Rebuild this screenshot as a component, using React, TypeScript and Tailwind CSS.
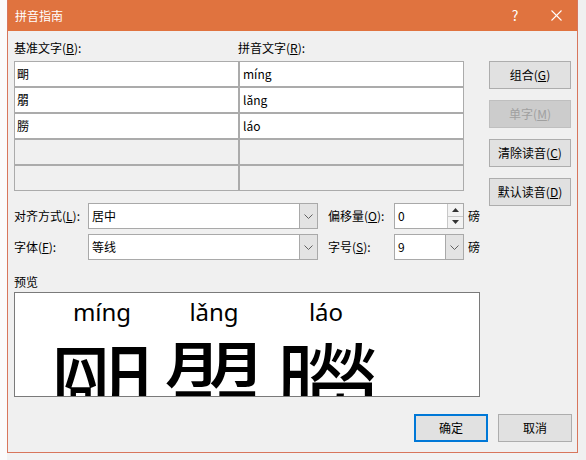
import React from "react";

const ui = "font-['Noto_Sans_CJK_SC','Noto_Sans',sans-serif]";

function Mn({ label, k, tail = "" }: { label: string; k: string; tail?: string }) {
  return (
    <span className="whitespace-nowrap">
      {label}(<span className="underline">{k}</span>){tail}
    </span>
  );
}

function Chevron() {
  return (
    <svg width="9" height="5" viewBox="0 0 9 5">
      <polyline points="0.5,0.5 4.5,4.5 8.5,0.5" fill="none" stroke="#606060" strokeWidth="1" />
    </svg>
  );
}

function Combo({ value, width }: { value: string; width: string }) {
  return (
    <div className={`${width} shrink-0 h-[26px] flex border border-[#a9a9a9] bg-white`}>
      <div className="flex-1 flex items-center pl-[3px] text-[12px] text-black">{value}</div>
      <div className="w-[18px] flex items-center justify-center bg-[#e3e3e3] border-l border-[#a9a9a9]">
        <Chevron />
      </div>
    </div>
  );
}

const rows = [
  { base: "朙", ruby: "míng" },
  { base: "朤", ruby: "lǎng" },
  { base: "朥", ruby: "láo" },
  null,
  null,
];

const sideButtons = [
  { label: "组合", k: "G", disabled: false },
  { label: "单字", k: "M", disabled: true },
  { label: "清除读音", k: "C", disabled: false },
  { label: "默认读音", k: "D", disabled: false },
];

export default function App() {
  return (
    <div className={`w-[586px] h-[460px] flex bg-[#f2f2f2] ${ui}`}>
      {/* window behind, left */}
      <div className="w-[7px] h-full bg-[#fbfbfb]" />

      {/* dialog */}
      <div className="w-[571px] h-[453px] flex flex-col border-x border-b border-[#d8765c]">
        <div className="h-[31px] flex items-center bg-[#e0733f] text-white pl-[7px]">
          <span className="text-[12px]">拼音指南</span>
          <div className="flex-1" />
          <span className="text-[14px] w-[20px] text-center mr-[26px]">?</span>
          <svg width="11" height="11" viewBox="0 0 11 11" className="mr-[15px]">
            <line x1="0.5" y1="0.5" x2="10.5" y2="10.5" stroke="white" strokeWidth="1.1" />
            <line x1="10.5" y1="0.5" x2="0.5" y2="10.5" stroke="white" strokeWidth="1.1" />
          </svg>
        </div>

        <div className="flex-1 flex flex-col bg-[#f0f0f0] pl-[6px] pr-[5px] pt-[9px] text-[12px] text-black">
          <div className="flex gap-[9px]">
            {/* left column */}
            <div className="w-[466px] flex flex-col">
              <div className="flex h-[16px] items-center">
                <div className="w-[224px]">
                  <Mn label="基准文字" k="B" tail=":" />
                </div>
                <Mn label="拼音文字" k="R" tail=":" />
              </div>

              <div className="mt-[5px] flex flex-col w-[450px]">
                {rows.map((r, i) => (
                  <div key={i} className="flex">
                    <div
                      className={`w-[225px] h-[26px] flex items-center pl-[2px] border border-[#ababab] ${
                        r ? "bg-white" : "bg-[#f0f0f0]"
                      }`}
                    >
                      {r?.base}
                    </div>
                    <div
                      className={`w-[225px] h-[26px] flex items-center pl-[3px] border border-[#ababab] ${
                        r ? "bg-white" : "bg-[#f0f0f0]"
                      }`}
                    >
                      {r?.ruby}
                    </div>
                  </div>
                ))}
              </div>

              <div className="mt-[12px] h-[26px] flex items-center">
                <div className="w-[74px] shrink-0">
                  <Mn label="对齐方式" k="L" tail=":" />
                </div>
                <Combo value="居中" width="w-[230px]" />
                <div className="w-[76px] shrink-0 pl-[10px]">
                  <Mn label="偏移量" k="O" tail=":" />
                </div>
                <div className="w-[70px] shrink-0 h-[26px] flex border border-[#a9a9a9] bg-white">
                  <div className="flex-1 flex items-center pl-[3px]">0</div>
                  <div className="w-[16px] flex flex-col border-l border-[#c8c8c8]">
                    <div className="flex-1 flex items-center justify-center bg-[#f3f3f3] border-b border-[#c8c8c8]">
                      <svg width="7" height="4" viewBox="0 0 7 4">
                        <polygon points="0,4 3.5,0 7,4" fill="#333" />
                      </svg>
                    </div>
                    <div className="flex-1 flex items-center justify-center bg-[#f3f3f3]">
                      <svg width="7" height="4" viewBox="0 0 7 4">
                        <polygon points="0,0 3.5,4 7,0" fill="#333" />
                      </svg>
                    </div>
                  </div>
                </div>
                <span className="ml-[4px]">磅</span>
              </div>

              <div className="mt-[5px] h-[26px] flex items-center">
                <div className="w-[74px] shrink-0">
                  <Mn label="字体" k="F" tail=":" />
                </div>
                <Combo value="等线" width="w-[230px]" />
                <div className="w-[76px] shrink-0 pl-[10px]">
                  <Mn label="字号" k="S" tail=":" />
                </div>
                <Combo value="9" width="w-[70px]" />
                <span className="ml-[4px]">磅</span>
              </div>

              <div className="mt-[14px] h-[16px] flex items-center">预览</div>

              <div className="mt-[2px] w-[466px] h-[105px] border border-[#7a7a7a] bg-white overflow-hidden flex pl-[31px] pt-[7px]">
                {rows.slice(0, 3).map((r, i) => (
                  <div key={i} className="w-[112px] flex flex-col items-center shrink-0">
                    <div className="h-[24px] text-[24px] leading-none font-['Noto_Sans',sans-serif]">
                      {r?.ruby}
                    </div>
                    <div className="mt-[8px] text-[105px] leading-none text-black">{r?.base}</div>
                  </div>
                ))}
              </div>
            </div>

            {/* right column buttons */}
            <div className="w-[82px] mt-[21px] flex flex-col gap-[11px]">
              {sideButtons.map((b) => (
                <div
                  key={b.k}
                  className={`h-[28px] flex items-center justify-center border ${
                    b.disabled
                      ? "bg-[#cccccc] border-[#bfbfbf] text-[#a0a0a0]"
                      : "bg-[#e1e1e1] border-[#adadad] text-black"
                  }`}
                >
                  <Mn label={b.label} k={b.k} />
                </div>
              ))}
            </div>
          </div>

          <div className="mt-[17px] flex justify-end gap-[10px]">
            <div className="w-[74px] h-[28px] flex items-center justify-center bg-[#e1e1e1] border-2 border-[#0078d7]">
              确定
            </div>
            <div className="w-[74px] h-[28px] flex items-center justify-center bg-[#e1e1e1] border border-[#adadad]">
              取消
            </div>
          </div>
        </div>
      </div>

      {/* window behind, right */}
      <div className="flex-1 h-full bg-[#f0f0f0]" />
    </div>
  );
}
